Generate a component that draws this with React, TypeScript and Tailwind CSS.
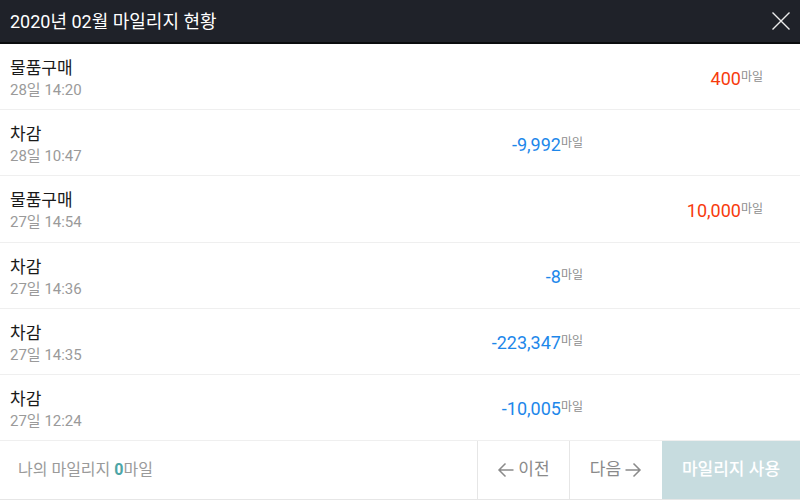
type Entry = {
  title: string;
  time: string;
  amount: number;
};

const ENTRIES: Entry[] = [
  { title: "물품구매", time: "28일 14:20", amount: 400 },
  { title: "차감", time: "28일 10:47", amount: -9992 },
  { title: "물품구매", time: "27일 14:54", amount: 10000 },
  { title: "차감", time: "27일 14:36", amount: -8 },
  { title: "차감", time: "27일 14:35", amount: -223347 },
  { title: "차감", time: "27일 12:24", amount: -10005 },
];

const FONT = { fontFamily: "Roboto, 'Noto Sans CJK KR', sans-serif" };

function Amount({ value }: { value: number }) {
  const isPlus = value > 0;
  return (
    <span className="inline-flex items-start">
      <span className={`text-[18px] leading-[22px] ${isPlus ? "text-[#f73b0d]" : "text-[#1d87ea]"}`}>
        {value.toLocaleString("en-US")}
      </span>
      <span className="mt-[2px] text-[12px] leading-[15px] text-[#8e8e8e]">마일</span>
    </span>
  );
}

function ArrowLeft() {
  return (
    <svg width="18" height="18" viewBox="0 0 18 18" fill="none" stroke="currentColor" strokeWidth="1.5">
      <path d="M16.5 9H2M8.5 2.5L2 9L8.5 15.5" />
    </svg>
  );
}

function ArrowRight() {
  return (
    <svg width="18" height="18" viewBox="0 0 18 18" fill="none" stroke="currentColor" strokeWidth="1.5">
      <path d="M1.5 9H16M9.5 2.5L16 9L9.5 15.5" />
    </svg>
  );
}

export default function App() {
  return (
    <main className="flex h-[500px] w-[800px] flex-col bg-white" style={FONT}>
      <header className="flex h-[44px] shrink-0 items-center justify-between border-b-2 border-[#0b0c0e] bg-[#1f2229] pl-[10px] pr-[8px]">
        <h1 className="text-[18px] font-normal text-white">2020년 02월 마일리지 현황</h1>
        <svg width="20" height="20" viewBox="0 0 20 20" stroke="#ececec" strokeWidth="1.4" className="mr-[1px]">
          <path d="M1.5 1.5L18.5 18.5M18.5 1.5L1.5 18.5" />
        </svg>
      </header>

      <div className="flex flex-1 flex-col">
        {ENTRIES.map((entry, index) => (
          <div
            key={index}
            className="flex flex-1 items-center border-b border-[#efefef] pl-[10px] pr-[37px]"
          >
            <div className="flex flex-1 flex-col pt-[4px]">
              <span className="text-[17px] leading-[23px] text-[#1a1a1a]">{entry.title}</span>
              <span className="text-[15px] leading-[20px] text-[#9a9a9a]">{entry.time}</span>
            </div>
            <div className="mt-[6px] text-right">
              {entry.amount < 0 ? <Amount value={entry.amount} /> : null}
            </div>
            <div className="mt-[6px] w-[180px] text-right">
              {entry.amount > 0 ? <Amount value={entry.amount} /> : null}
            </div>
          </div>
        ))}
      </div>

      <footer className="flex h-[59px] shrink-0 border-b border-[#e6e6e6]">
        <div className="flex flex-1 items-center pl-[18px] text-[16px] text-[#9a9a9a]">
          나의 마일리지&nbsp;<span className="font-bold text-[#4da5a6]">0</span>마일
        </div>
        <button
          type="button"
          className="flex w-[92px] items-center justify-center gap-[3px] border-l border-[#e6e6e6] text-[17px] text-[#8a8a8a]"
        >
          <ArrowLeft />
          이전
        </button>
        <button
          type="button"
          className="flex w-[93px] items-center justify-center gap-[3px] border-l border-[#e6e6e6] text-[17px] text-[#8a8a8a]"
        >
          다음
          <ArrowRight />
        </button>
        <button
          type="button"
          className="flex w-[138px] items-center justify-center bg-[#c7dcdf] text-[17px] font-medium text-white"
        >
          마일리지 사용
        </button>
      </footer>
    </main>
  );
}
